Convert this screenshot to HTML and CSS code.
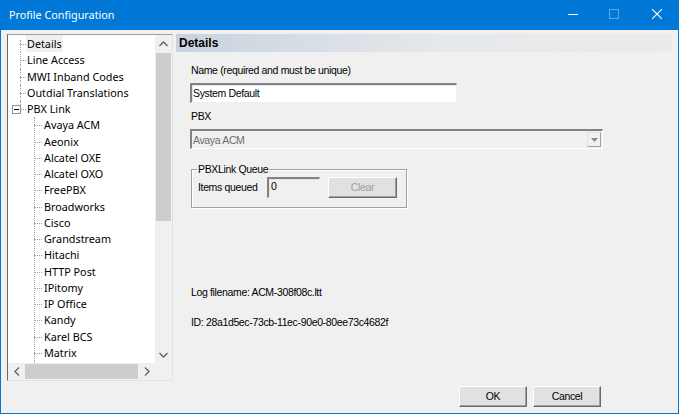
FILE: index.html
```html
<!DOCTYPE html>
<html>
<head>
<meta charset="utf-8">
<link rel="stylesheet" href="styles.css">
</head>
<body>
<div class="window">
  <div class="titlebar">
    <span class="title">Profile Configuration</span>
    <div class="caption-btns">
      <span class="cbtn"><svg width="10" height="10" viewBox="0 0 10 10"><path d="M0 5.5H10" stroke="#fff" stroke-width="1"/></svg></span>
      <span class="cbtn dim"><svg width="10" height="10" viewBox="0 0 10 10"><rect x="0.5" y="0.5" width="9" height="9" fill="none" stroke="#5ea4e6" stroke-width="1"/></svg></span>
      <span class="cbtn"><svg width="10" height="10" viewBox="0 0 10 10"><path d="M0 0L10 10M10 0L0 10" stroke="#fff" stroke-width="1.1"/></svg></span>
    </div>
  </div>
  <div class="main">
    <div class="tree">
      <div class="tree-view">
        <ul class="lvl1">
          <li class="first"><span class="sel">Details</span></li>
          <li>Line Access</li>
          <li>MWI Inband Codes</li>
          <li>Outdial Translations</li>
          <li class="last open"><span class="expander"></span>PBX Link
            <ul class="lvl2">
              <li>Avaya ACM</li>
              <li>Aeonix</li>
              <li>Alcatel OXE</li>
              <li>Alcatel OXO</li>
              <li>FreePBX</li>
              <li>Broadworks</li>
              <li>Cisco</li>
              <li>Grandstream</li>
              <li>Hitachi</li>
              <li>HTTP Post</li>
              <li>IPitomy</li>
              <li>IP Office</li>
              <li>Kandy</li>
              <li>Karel BCS</li>
              <li>Matrix</li>
            </ul>
          </li>
        </ul>
      </div>
      <div class="vscroll">
        <span class="arrow"><svg width="9" height="6" viewBox="0 0 9 6"><path d="M0.5 5L4.5 1L8.5 5" fill="none" stroke="#606060" stroke-width="1.3"/></svg></span>
        <div class="vtrack"><div class="vthumb"></div></div>
        <span class="arrow"><svg width="9" height="6" viewBox="0 0 9 6"><path d="M0.5 1L4.5 5L8.5 1" fill="none" stroke="#606060" stroke-width="1.3"/></svg></span>
      </div>
      <div class="hscroll">
        <span class="harrow"><svg width="6" height="9" viewBox="0 0 6 9"><path d="M5 0.5L1 4.5L5 8.5" fill="none" stroke="#606060" stroke-width="1.3"/></svg></span>
        <div class="htrack"><div class="hthumb"></div></div>
        <span class="harrow"><svg width="6" height="9" viewBox="0 0 6 9"><path d="M1 0.5L5 4.5L1 8.5" fill="none" stroke="#606060" stroke-width="1.3"/></svg></span>
      </div>
      <div class="corner"></div>
    </div>
    <div class="panel">
      <div class="panel-head">Details</div>
      <div class="form">
        <div class="label name-label">Name (required and must be unique)</div>
        <div class="textbox name-box">System Default</div>
        <div class="label pbx-label">PBX</div>
        <div class="combo">
          <span class="combo-text">Avaya ACM</span>
          <span class="combo-btn"><svg width="7" height="4" viewBox="0 0 7 4"><path d="M0 0H7L3.5 4Z" fill="#8a8a8a"/></svg></span>
        </div>
        <fieldset class="group">
          <legend>PBXLink Queue</legend>
          <div class="group-row">
            <span class="label">Items queued</span>
            <span class="textbox ro">0</span>
            <span class="btn disabled clear">Clear</span>
          </div>
        </fieldset>
        <div class="label log">Log filename: ACM-308f08c.ltt</div>
        <div class="label id">ID: 28a1d5ec-73cb-11ec-90e0-80ee73c4682f</div>
      </div>
    </div>
  </div>
  <div class="footer">
    <span class="btn">OK</span>
    <span class="btn">Cancel</span>
  </div>
</div>
</body>
</html>
```
FILE: styles.css
```css
html, body {
  margin: 0;
  padding: 0;
  background: #f0f0f0;
}
.window {
  width: 679px;
  height: 414px;
  box-sizing: border-box;
  border: 1px solid #0078d7;
  border-top: none;
  background: #f0f0f0;
  display: flex;
  flex-direction: column;
  font-family: "Liberation Sans", Arial, sans-serif;
  font-size: 10.5px;
  letter-spacing: -0.35px;
  color: #000;
}
.titlebar {
  height: 30px;
  background: #0078d7;
  margin: 0 -1px;
  display: flex;
  align-items: center;
  justify-content: space-between;
  color: #fff;
}
.title {
  font-family: "Noto Sans", "Open Sans", sans-serif;
  font-size: 10.8px;
  letter-spacing: 0;
  padding-left: 9px;
  padding-bottom: 2px;
}
.caption-btns {
  display: flex;
  height: 100%;
}
.cbtn {
  width: 41px;
  display: flex;
  align-items: center;
  justify-content: center;
  padding-bottom: 2px;
}
.cbtn:last-child { width: 45px; }
.main {
  display: flex;
  padding: 4px 0 0 6px;
}
.tree {
  width: 166px;
  height: 347px;
  box-sizing: border-box;
  border: 1px solid #a0a0a0;
  border-left: 1px solid #696969;
  border-right: 1px solid #e3e3e3;
  border-bottom: 1px solid #e3e3e3;
  background: #fff;
  display: grid;
  grid-template-columns: 1fr 17px;
  grid-template-rows: 1fr 17px;
  font-family: "Noto Sans", "Open Sans", sans-serif;
  font-size: 10.8px;
  letter-spacing: 0;
  overflow: hidden;
}
.tree-view {
  overflow: hidden;
  padding-top: 1px;
}
.tree ul {
  list-style: none;
  margin: 0;
  padding: 0;
}
.tree li {
  position: relative;
  white-space: nowrap;
}
.lvl1 > li {
  padding-left: 19px;
  line-height: 16.25px;
}
.lvl1 > li::before {
  content: "";
  position: absolute;
  left: 12px;
  top: 8px;
  width: 6px;
  border-top: 1px dotted #a0a0a0;
}
.lvl1 > li::after {
  content: "";
  position: absolute;
  left: 12px;
  top: 0;
  height: 16.25px;
  border-left: 1px dotted #a0a0a0;
}
.lvl1 > li.first::after { top: 4px; height: 12.25px; }
.lvl1 > li.last::after { height: 8px; }
.sel {
  background: #f0f0f0;
  padding: 1px 1px;
  margin-left: -1px;
}
.expander {
  position: absolute;
  left: 4px;
  top: 4px;
  width: 9px;
  height: 9px;
  box-sizing: border-box;
  border: 1px solid #919191;
  background: #fff;
  z-index: 1;
}
.expander::after {
  content: "";
  position: absolute;
  left: 1px;
  top: 3px;
  width: 5px;
  border-top: 1px solid #000;
}
.lvl2 {
  margin-left: -19px !important;
  position: relative;
}
.lvl2::before {
  content: "";
  position: absolute;
  left: 26px;
  top: 0;
  bottom: -20px;
  border-left: 1px dotted #a0a0a0;
}
.lvl2 > li {
  padding-left: 36px;
  line-height: 16.25px;
}
.lvl2 > li::before {
  content: "";
  position: absolute;
  left: 26px;
  top: 8px;
  width: 8px;
  border-top: 1px dotted #a0a0a0;
}
.vscroll {
  background: #f0f0f0;
  display: flex;
  flex-direction: column;
  align-items: center;
}
.arrow {
  height: 17px;
  display: flex;
  align-items: center;
  justify-content: center;
}
.vtrack {
  flex: 1;
  width: 100%;
  padding-top: 1px;
}
.vthumb {
  margin: 0 1px;
  height: 168px;
  background: #cdcdcd;
}
.hscroll {
  background: #f0f0f0;
  display: flex;
  align-items: center;
}
.harrow {
  width: 17px;
  height: 17px;
  display: flex;
  align-items: center;
  justify-content: center;
}
.htrack {
  flex: 1;
  height: 100%;
  display: flex;
  align-items: center;
}
.hthumb {
  width: 113px;
  height: 15px;
  background: #cdcdcd;
}
.corner {
  background: #f0f0f0;
}
.panel {
  margin-left: 3px;
  width: 496px;
  display: flex;
  flex-direction: column;
}
.panel-head {
  height: 18px;
  background: linear-gradient(to right, #c9d3df, #e6e9ec 55%, #ebebeb);
  font-family: "Liberation Sans", Arial, sans-serif;
  font-weight: bold;
  font-size: 12px;
  letter-spacing: 0;
  line-height: 19px;
  padding-left: 3px;
  color: #000;
}
.form {
  padding-left: 14px;
  display: flex;
  flex-direction: column;
  align-items: flex-start;
}
.label {
  line-height: 13px;
}
.name-label { margin-top: 12px; margin-left: 1px; }
.textbox {
  box-sizing: border-box;
  background: #fff;
  border-top: 2px solid #828282;
  border-left: 2px solid #828282;
  border-right: 1px solid #f0f0f0;
  border-bottom: 1px solid #f0f0f0;
  box-shadow: inset 1px 1px 0 #e3e3e3;
  line-height: 16px;
  padding-left: 1px;
}
.name-box {
  margin-top: 6px;
  width: 267px;
  height: 20px;
}
.pbx-label { margin-top: 7px; margin-left: 1px; }
.combo {
  margin-top: 6px;
  width: 413px;
  height: 20px;
  box-sizing: border-box;
  border-top: 2px solid #828282;
  border-left: 2px solid #828282;
  border-right: 1px solid #ffffff;
  border-bottom: 1px solid #ffffff;
  background: #f0f0f0;
  display: flex;
  align-items: center;
  justify-content: space-between;
  color: #6d6d6d;
}
.combo-text { padding-left: 1px; }
.combo-btn {
  width: 14px;
  height: 15px;
  box-sizing: border-box;
  border: 1px solid #e3e3e3;
  border-right-color: #a0a0a0;
  border-bottom-color: #a0a0a0;
  display: flex;
  align-items: center;
  justify-content: center;
  margin-right: 1px;
}
.group {
  margin: 15px 0 0 1px;
  width: 216px;
  height: 44px;
  box-sizing: border-box;
  border: 1px solid #a0a0a0;
  box-shadow: 1px 1px 0 #fff, inset 1px 1px 0 #fff;
  padding: 0 0 0 6px;
}
.group legend {
  padding: 0 1px;
  margin-left: -1px;
  line-height: 11px;
}
.group-row {
  display: flex;
  align-items: center;
  margin-top: 2px;
}
.group-row .label { width: 60px; }
.ro {
  margin-left: 9px;
  width: 53px;
  height: 21px;
  background: #f0f0f0;
  line-height: 14px;
  padding-left: 2px;
}
.btn {
  box-sizing: border-box;
  height: 21px;
  background: #e1e1e1;
  border: 1px solid #fff;
  border-right-color: #696969;
  border-bottom-color: #696969;
  box-shadow: inset -1px -1px 0 #a0a0a0;
  display: flex;
  align-items: center;
  justify-content: center;
  padding-bottom: 1px;
}
.clear {
  margin-left: 8px;
  width: 69px;
}
.disabled { color: #a0a0a0; }
.log { margin-top: 78px; margin-left: 1px; }
.id { margin-top: 17px; margin-left: 1px; }
.footer {
  margin-top: auto;
  display: flex;
  justify-content: flex-end;
  gap: 6px;
  padding: 0 77px 6px 0;
}
.footer .btn {
  width: 68px;
  height: 21px;
}
```
